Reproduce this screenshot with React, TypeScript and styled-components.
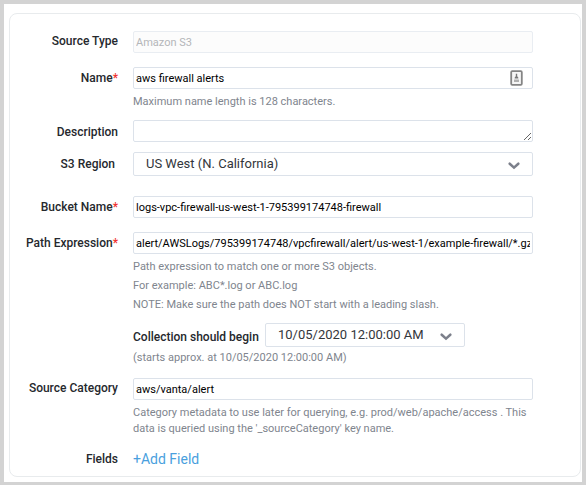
import React from 'react';
import styled, { createGlobalStyle } from 'styled-components';

const GlobalStyle = createGlobalStyle`
  * { box-sizing: border-box; }
  body { margin: 0; background: #d3d3d3; font-family: Roboto, sans-serif; }
`;

const Page = styled.main`
  width: 586px;
  height: 485px;
  border: solid #d3d3d3;
  border-width: 4px 4px 3px;
  background: #fff;
  padding: 9px 1px 5px 5px;
`;

const Card = styled.form`
  height: 464px;
  border: 1px solid #e8ebed;
  border-radius: 8px;
  padding-top: 17px;
`;

const Row = styled.div<{ $height: number }>`
  display: grid;
  grid-template-columns: 108px 400px;
  column-gap: 15px;
  align-items: start;
  height: ${p => p.$height}px;
`;

const Label = styled.label<{ $shift?: number; $inset?: number }>`
  font-size: 12px;
  font-weight: 500;
  line-height: 22px;
  color: #25282d;
  text-align: right;
  white-space: nowrap;
  margin-top: ${p => p.$shift ?? 0}px;
  padding-right: ${p => p.$inset ?? 0}px;
`;

const Required = styled.span`
  color: #f0322f;
`;

const Field = styled.div`
  position: relative;
  min-width: 0;
`;

const TextInput = styled.input`
  display: block;
  width: 100%;
  height: 22px;
  margin: 0;
  padding: 1px 2px;
  border: 1px solid #dce2ea;
  border-radius: 2px;
  background: #fff;
  font: 400 11px Roboto, sans-serif;
  color: #000;
  outline: none;

  &:disabled {
    background: #fcfcfc;
    border-color: #e9edf2;
    color: #b4b6b9;
  }
`;

const TextArea = styled.textarea`
  display: block;
  width: 100%;
  height: 22px;
  margin: 0;
  padding: 2px;
  border: 1px solid #dce2ea;
  border-radius: 2px;
  font: 400 11px Roboto, sans-serif;
  resize: none;
  overflow: hidden;
  outline: none;
`;

const Grip = styled.svg`
  position: absolute;
  right: 1px;
  bottom: 1px;
`;

const ContactIcon = styled.svg`
  position: absolute;
  right: 10px;
  top: 3px;
`;

const Select = styled.div<{ $width: number }>`
  display: flex;
  align-items: center;
  justify-content: space-between;
  width: ${p => p.$width}px;
  height: 24px;
  padding: 0 12px;
  border: 1px solid #dce2ea;
  border-radius: 2px;
  font-size: 13px;
  line-height: 22px;
  color: #33363b;

  svg { margin-top: 4px; }
`;

const Help = styled.p<{ $line?: number; $gap?: number }>`
  margin: ${p => p.$gap ?? 3}px 0 0;
  font-size: 11px;
  line-height: ${p => p.$line ?? 19}px;
  color: #80858e;
  white-space: nowrap;
`;

const Inline = styled.div`
  display: flex;
  align-items: flex-start;
  justify-content: space-between;
  width: 332px;
`;

const AddField = styled.a`
  display: block;
  margin-top: -1px;
  font-size: 14px;
  line-height: 22px;
  color: #4a9fde;
  text-decoration: none;
`;

const Chevron = () => (
  <svg width="12" height="8" viewBox="0 0 12 8" fill="none">
    <path d="M1.7 1.7 L6 5.6 L10.3 1.7" stroke="#7c808b" strokeWidth="2.5" strokeLinecap="round" />
  </svg>
);

export default function App() {
  return (
    <>
      <GlobalStyle />
      <Page>
        <Card>
          <Row $height={36}>
            <Label $shift={-1}>Source Type</Label>
            <Field><TextInput disabled defaultValue="Amazon S3" /></Field>
          </Row>
          <Row $height={53}>
            <Label>Name<Required>*</Required></Label>
            <Field>
              <TextInput defaultValue="aws firewall alerts" />
              <ContactIcon width="13" height="16" viewBox="0 0 13 16">
                <rect x="1.2" y="1.2" width="10.6" height="13.6" rx="1" fill="#f6f6f6" stroke="#858585" strokeWidth="1.8" />
                <path d="M5.8 3.8h1.4v2.4l1.1 1.4v1H4.7v-1l1.1-1.4z" fill="#777" />
                <path d="M4 9.5h5v2.5H4z" fill="#b0b0b0" />
              </ContactIcon>
              <Help>Maximum name length is 128 characters.</Help>
            </Field>
          </Row>
          <Row $height={32}>
            <Label $shift={1}>Description</Label>
            <Field>
              <TextArea />
              <Grip width="9" height="9" viewBox="0 0 9 9">
                <path d="M1 8L8 1M5 8L8 5" stroke="#555" strokeWidth="0.9" />
              </Grip>
            </Field>
          </Row>
          <Row $height={44}>
            <Label $shift={1} $inset={3}>S3 Region</Label>
            <Field><Select $width={400}>US West (N. California)<Chevron /></Select></Field>
          </Row>
          <Row $height={36}>
            <Label>Bucket Name<Required>*</Required></Label>
            <Field><TextInput defaultValue="logs-vpc-firewall-us-west-1-795399174748-firewall" /></Field>
          </Row>
          <Row $height={91}>
            <Label>Path Expression<Required>*</Required></Label>
            <Field>
              <TextInput defaultValue="alert/AWSLogs/795399174748/vpcfirewall/alert/us-west-1/example-firewall/*.gz" />
              <Help>
                Path expression to match one or more S3 objects.<br />
                For example: ABC*.log or ABC.log<br />
                NOTE: Make sure the path does NOT start with a leading slash.
              </Help>
            </Field>
          </Row>
          <Row $height={55}>
            <span />
            <Field>
              <Inline>
                <Label $shift={3}>Collection should begin</Label>
                <Select $width={200}>10/05/2020 12:00:00 AM<Chevron /></Select>
              </Inline>
              <Help $gap={0}>(starts approx. at 10/05/2020 12:00:00 AM)</Help>
            </Field>
          </Row>
          <Row $height={71}>
            <Label $shift={-1}>Source Category</Label>
            <Field>
              <TextInput defaultValue="aws/vanta/alert" />
              <Help $line={16} $gap={5}>
                Category metadata to use later for querying, e.g. prod/web/apache/access . This<br />
                data is queried using the '_sourceCategory' key name.
              </Help>
            </Field>
          </Row>
          <Row $height={22}>
            <Label $shift={-1}>Fields</Label>
            <AddField>+Add Field</AddField>
          </Row>
        </Card>
      </Page>
    </>
  );
}
